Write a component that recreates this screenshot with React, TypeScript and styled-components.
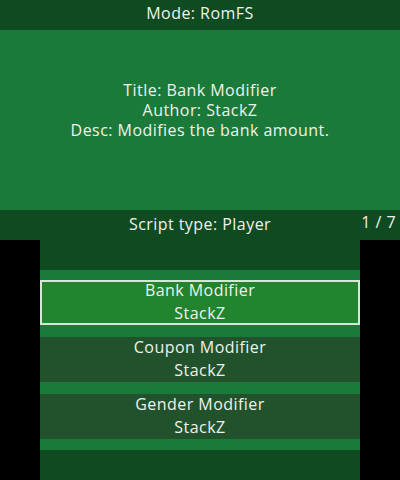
import React from "react";
import styled, { createGlobalStyle } from "styled-components";

const GlobalStyle = createGlobalStyle`
  html, body { margin: 0; padding: 0; background: #000; }
  body { font-family: "Open Sans", "Noto Sans", sans-serif; }
`;

const C = {
  dark: "#0f4a20",
  main: "#1b7a39",
  selected: "#23842f",
  item: "#21522b",
  border: "#d6e6d6",
  text: "#eef3ee",
};

const Device = styled.div`
  width: 400px;
  height: 480px;
  display: flex;
  flex-direction: column;
  color: ${C.text};
  font-size: 16px;
  letter-spacing: 0.45px;
`;

const TopScreen = styled.section`
  height: 240px;
  display: flex;
  flex-direction: column;
  background: ${C.main};
`;

const Bar = styled.div`
  height: 30px;
  box-sizing: border-box;
  padding-bottom: 5px;
  flex: none;
  background: ${C.dark};
  display: flex;
  align-items: center;
  justify-content: center;
  line-height: 1;
`;

const InfoBar = styled.div`
  height: 30px;
  box-sizing: border-box;
  padding-bottom: 2px;
  flex: none;
  background: ${C.dark};
  display: grid;
  grid-template-columns: 1fr auto 1fr;
  align-items: center;
  line-height: 1;
`;

const Counter = styled.span`
  justify-self: end;
  padding-right: 4px;
  margin-top: -5px;
`;

const Info = styled.div`
  flex: 1;
  display: flex;
  flex-direction: column;
  align-items: center;
  justify-content: center;
  line-height: 20px;
  padding-bottom: 21px;
`;

const BottomScreen = styled.section`
  height: 240px;
  display: flex;
  justify-content: center;
  background: #000;
`;

const Panel = styled.div`
  width: 320px;
  display: flex;
  flex-direction: column;
  background: ${C.main};
`;

const List = styled.div`
  flex: 1;
  display: flex;
  flex-direction: column;
  gap: 12px;
  padding-top: 10px;
`;

const Item = styled.div<{ $selected?: boolean }>`
  height: 45px;
  box-sizing: border-box;
  background: ${(p) => (p.$selected ? C.selected : C.item)};
  border: 2px solid ${(p) => (p.$selected ? C.border : "transparent")};
  display: flex;
  flex-direction: column;
  align-items: center;
  justify-content: center;
  line-height: 23px;
  padding-bottom: 1px;
`;

const Spacer = styled.div`
  height: 30px;
  flex: none;
  background: ${C.dark};
`;

const scripts = [
  { title: "Bank Modifier", author: "StackZ" },
  { title: "Coupon Modifier", author: "StackZ" },
  { title: "Gender Modifier", author: "StackZ" },
];

export default function App() {
  return (
    <>
      <GlobalStyle />
      <Device>
        <TopScreen>
          <Bar>Mode: RomFS</Bar>
          <Info>
            <span>Title: Bank Modifier</span>
            <span>Author: StackZ</span>
            <span>Desc: Modifies the bank amount.</span>
          </Info>
          <InfoBar>
            <span />
            <span>Script type: Player</span>
            <Counter>1 / 7</Counter>
          </InfoBar>
        </TopScreen>
        <BottomScreen>
          <Panel>
            <Spacer />
            <List>
              {scripts.map((s, i) => (
                <Item key={s.title} $selected={i === 0}>
                  <span>{s.title}</span>
                  <span>{s.author}</span>
                </Item>
              ))}
            </List>
            <Spacer />
          </Panel>
        </BottomScreen>
      </Device>
    </>
  );
}
